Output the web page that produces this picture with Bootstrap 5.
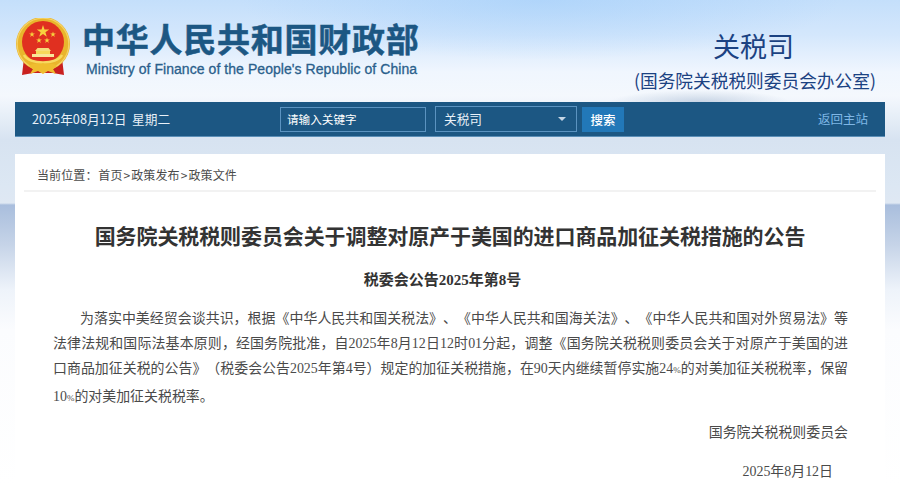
<!DOCTYPE html>
<html lang="zh-CN">
<head>
    <meta charset="UTF-8">
    <meta name="viewport" content="width=device-width, initial-scale=1.0">
    <title>国务院关税税则委员会关于调整对原产于美国的进口商品加征关税措施的公告</title>
    <link href="https://cdn.jsdelivr.net/npm/bootstrap@5.3.0/dist/css/bootstrap.min.css" rel="stylesheet">
    <style>
        html, body { height: 485px; overflow: hidden; }
        body {
            font-family: "Noto Sans CJK SC", "Liberation Sans", sans-serif;
            background:
                radial-gradient(ellipse 90px 12px at 700px 102px, rgba(165,185,210,.55) 0%, rgba(165,185,210,0) 100%),
                radial-gradient(ellipse 300px 60px at 60% 0, rgba(160,205,250,.55) 0%, rgba(160,205,250,0) 100%),
                linear-gradient(180deg, #c4dffb 0, #d4e7fc 35px, #f0f6fe 72px, #f4f8fd 96px, #d7e3f1 140px, #dce7f3 185px, #dfe8f3 203px, #a9bedd 205px, #c6d4e8 245px, #eef3fa 290px, #fbfcfe 330px, #ffffff 485px);
        }
        .site-wrap { width: 870px; margin: 0 auto; }
        .site-head { height: 102px; }
        .emblem { width: 56px; height: 58px; margin-top: 18px; }
        .brand { margin-left: 11px; margin-top: 17px; }
        .brand-cn { font-size: 33px; font-weight: 700; line-height: 42px; letter-spacing: .75px; color: #1c5783; white-space: nowrap; -webkit-text-stroke: .5px #1c5783; }
        .brand-en { font-family: "Liberation Sans", sans-serif; font-size: 14px; line-height: 18px; margin: 1px 0 0 4px; color: #2a5f8c; white-space: nowrap; letter-spacing: .06px; -webkit-text-stroke: .3px #2a5f8c; }
        .dept { width: 241px; margin: 27px 10px 0 0; color: #1b4282; text-align: center; }
        .dept-name { font-size: 27px; line-height: 38px; margin-left: -2px; }
        .dept-sub { font-size: 17.7px; line-height: 26px; margin-top: 2px; white-space: nowrap; }
        .toolbar { height: 35px; background: #1c5783; border-bottom: 1px solid #5b8fb8; color: #e9f1f8; font-size: 12.7px; padding-left: 17px; padding-right: 17px; }
        .toolbar-date { width: 248px; white-space: pre; }
        .kw-box { width: 146px; height: 25px; border: 1px solid #5b93c0; padding-left: 6px; font-size: 11.6px; line-height: 22px; color: #fff; }
        .dept-select { width: 142px; height: 26px; border: 1px solid #5b93c0; margin-left: 9px; padding: 0 10px 0 8px; line-height: 22px; color: #e9f1f8; }
        .caret-down { width: 0; height: 0; border-left: 4px solid transparent; border-right: 4px solid transparent; border-top: 4px solid #c5d6e5; }
        .search-btn { width: 42px; height: 25px; margin-left: 5px; padding: 0; border: 0; border-radius: 0; background: #2278b8; color: #fff; font-size: 12.5px; font-weight: 500; line-height: 25px; }
        .home-link { color: #7fb7e6; text-decoration: none; font-size: 12.5px; }
        .doc-panel { background: #fff; margin-top: 17px; padding: 0 9px; height: 340px; }
        .crumbs { height: 38px; border-bottom: 2px solid #f2f2f2; padding-left: 13px; font-size: 12px; letter-spacing: .1px; line-height: 41px; color: #4a4a4a; }
        .crumb-here { margin-right: -2px; }
        .crumb-sep { margin: 0 1px; }
        .doc-title { font-size: 21px; font-weight: 700; line-height: 28px; color: #333; text-align: center; margin: 29px 0 0; letter-spacing: -.1px; }
        .doc-no { font-size: 15px; font-weight: 700; line-height: 20px; text-align: center; color: #333; margin: 20px 0 0; padding-right: 15px; }
        .doc-no span, .doc-body { font-family: "Liberation Serif", "Noto Sans CJK SC", serif; }
        .doc-body { padding: 0 28px 0 29px; margin-top: 16px; color: #4a4a4a; font-size: 13.93px; line-height: 25.2px; text-spacing-trim: space-all; }
        .doc-body p { margin: 0; }
        .doc-body .lead-line { text-indent: 27px; text-align: justify; text-align-last: justify; text-justify: inter-character; }
        .doc-body .pct { font-size: 9px; }
        .doc-body .doc-sign { text-align: right; margin-top: 9px; }
        .doc-body .doc-date { text-align: right; margin-top: 14px; padding-right: 15px; }
    </style>
</head>
<body>
<div class="site-wrap">
    <!-- header -->
    <div class="site-head d-flex">
        <svg class="emblem flex-shrink-0" viewBox="0 0 56 58" aria-hidden="true">
            <path d="M9 40 L7 57 L18 55 H38 L49 57 L47 40 Z" fill="#c9201f"/>
            <circle cx="28" cy="26" r="27" fill="#e9b52c"/>
            <circle cx="28" cy="26" r="25.8" fill="none" stroke="#f5d264" stroke-width="1.2"/>
            <circle cx="28" cy="24" r="21" fill="#e03020"/>
            <polygon points="28,7 29.5,11.4 34.2,11.4 30.4,14.2 31.8,18.7 28,16 24.2,18.7 25.6,14.2 21.8,11.4 26.5,11.4" fill="#f7d23e"/>
            <polygon points="17,13.5 17.7,15.5 19.9,15.5 18.1,16.8 18.8,18.9 17,17.6 15.2,18.9 15.9,16.8 14.1,15.5 16.3,15.5" fill="#f7d23e"/>
            <polygon points="38,13.5 38.7,15.5 40.9,15.5 39.1,16.8 39.8,18.9 38,17.6 36.2,18.9 36.9,16.8 35.1,15.5 37.3,15.5" fill="#f7d23e"/>
            <polygon points="24,19.5 24.7,21.5 26.9,21.5 25.1,22.8 25.8,24.9 24,23.6 22.2,24.9 22.9,22.8 21.1,21.5 23.3,21.5" fill="#f7d23e"/>
            <polygon points="32,19.5 32.7,21.5 34.9,21.5 33.1,22.8 33.8,24.9 32,23.6 30.2,24.9 30.9,22.8 29.1,21.5 31.3,21.5" fill="#f7d23e"/>
            <path d="M20 33 H36 L33.5 30 H22.5 Z" fill="#f6dd7a"/>
            <rect x="21" y="33" width="14" height="3" fill="#f7d85a"/>
            <rect x="17" y="36" width="22" height="3" fill="#f9e69a"/>
            <path d="M9 37 C14 47 42 47 47 37" fill="none" stroke="#f7d95f" stroke-width="2.5"/>
            <path d="M14 48 C18 44 24 47 28 45 C32 47 38 44 42 48 L38 51 L41 56 L33 53 L28 56 L23 53 L15 56 L18 51 Z" fill="#efbd2f"/>
        </svg>
        <div class="brand">
            <div class="brand-cn">中华人民共和国财政部</div>
            <div class="brand-en">Ministry of Finance of the People's Republic of China</div>
        </div>
        <div class="dept ms-auto">
            <div class="dept-name">关税司</div>
            <div class="dept-sub">(国务院关税税则委员会办公室)</div>
        </div>
    </div>

    <!-- toolbar -->
    <div class="toolbar d-flex align-items-center">
        <div class="toolbar-date">2025年08月12日  星期二</div>
        <div class="kw-box">请输入关键字</div>
        <div class="dept-select d-flex align-items-center justify-content-between">
            <span>关税司</span>
            <span class="caret-down"></span>
        </div>
        <button type="button" class="btn search-btn">搜索</button>
        <a class="home-link ms-auto" href="#">返回主站</a>
    </div>

    <!-- article -->
    <div class="doc-panel">
        <div class="crumbs"><span class="crumb-here">当前位置： </span>首页<span class="crumb-sep">&gt;</span>政策发布<span class="crumb-sep">&gt;</span>政策文件</div>
        <h1 class="doc-title">国务院关税税则委员会关于调整对原产于美国的进口商品加征关税措施的公告</h1>
        <div class="doc-no">税委会公告<span>2025</span>年第<span>8</span>号</div>
        <div class="doc-body">
            <p class="lead-line">为落实中美经贸会谈共识，根据《中华人民共和国关税法》、《中华人民共和国海关法》、《中华人民共和国对外贸易法》等<br>法律法规和国际法基本原则，经国务院批准，自2025年8月12日12时01分起，调整《国务院关税税则委员会关于对原产于美国的进<br>口商品加征关税的公告》（税委会公告2025年第4号）规定的加征关税措施，在90天内继续暂停实施24<span class="pct">%</span>的对美加征关税税率，保留</p>
            <p>10<span class="pct">%</span>的对美加征关税税率。</p>
            <p class="doc-sign">国务院关税税则委员会</p>
            <p class="doc-date">2025年8月12日</p>
        </div>
    </div>
</div>
<script src="https://cdn.jsdelivr.net/npm/bootstrap@5.3.0/dist/js/bootstrap.bundle.min.js"></script>
</body>
</html>
